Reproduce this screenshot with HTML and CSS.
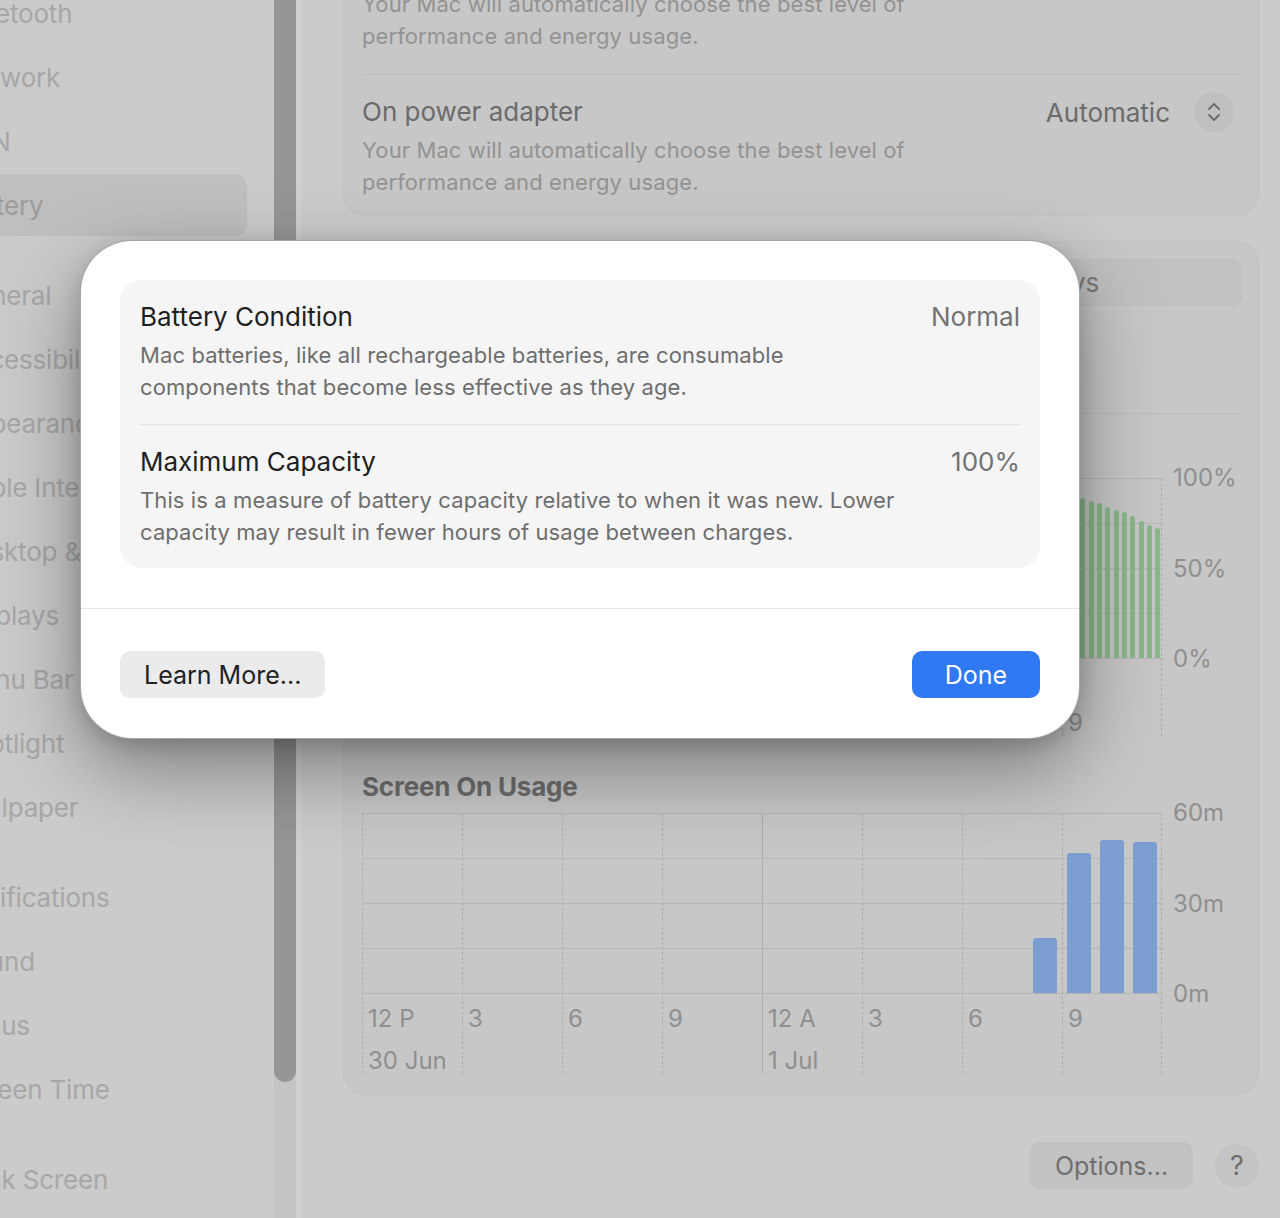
FILE: index.html
```html
<!DOCTYPE html>
<html lang="en">

<head>
    <meta charset="UTF-8">
    <meta name="viewport" content="width=device-width, initial-scale=1.0">
    <title>Battery</title>
    <link rel="stylesheet" href="styles.css">
</head>

<body>
    <div class="window">
        <nav class="sidebar">
            <ul class="nav-group">
                <li>Bluetooth</li>
                <li>Network</li>
                <li>VPN</li>
                <li class="active">Battery</li>
            </ul>
            <ul class="nav-group">
                <li>General</li>
                <li>Accessibility</li>
                <li>Appearance</li>
                <li>Apple Intelligence &amp; Siri</li>
                <li>Desktop &amp; Dock</li>
                <li>Displays</li>
                <li>Menu Bar</li>
                <li>Spotlight</li>
                <li>Wallpaper</li>
            </ul>
            <ul class="nav-group">
                <li>Notifications</li>
                <li>Sound</li>
                <li>Focus</li>
                <li>Screen Time</li>
            </ul>
            <ul class="nav-group">
                <li>Lock Screen</li>
                <li>Privacy &amp; Security</li>
            </ul>
        </nav>

        <div class="scroll-track">
            <div class="scroll-thumb"></div>
        </div>

        <main class="content">
            <section class="card modes">
                <div class="row">
                    <div class="row-text">
                        <p class="row-title">On battery</p>
                        <p class="row-desc">Your Mac will automatically choose the best level of performance and energy usage.</p>
                    </div>
                    <div class="row-value">
                        <span>Automatic</span>
                        <span class="stepper">
                            <svg width="14" height="22" viewBox="0 0 14 22">
                                <path d="M2 8 L7 3 L12 8 M2 14 L7 19 L12 14" fill="none" stroke="#6f6f6f" stroke-width="2" stroke-linecap="round" stroke-linejoin="round"/>
                            </svg>
                        </span>
                    </div>
                </div>
                <div class="row">
                    <div class="row-text">
                        <p class="row-title">On power adapter</p>
                        <p class="row-desc">Your Mac will automatically choose the best level of performance and energy usage.</p>
                    </div>
                    <div class="row-value">
                        <span>Automatic</span>
                        <span class="stepper">
                            <svg width="14" height="22" viewBox="0 0 14 22">
                                <path d="M2 8 L7 3 L12 8 M2 14 L7 19 L12 14" fill="none" stroke="#6f6f6f" stroke-width="2" stroke-linecap="round" stroke-linejoin="round"/>
                            </svg>
                        </span>
                    </div>
                </div>
            </section>

            <section class="card history">
                <div class="segmented">
                    <span>Last 24 Hours</span>
                    <span>Last 10 Days</span>
                </div>
                <div class="summary">
                    <p class="row-title">Last charged to 100%</p>
                </div>

                <h3 class="chart-title">Battery Level</h3>
                <div class="chart">
                    <div class="chart-main">
                        <div class="vlines">
                            <span></span><span></span><span></span><span></span>
                            <span class="day"></span><span></span><span></span><span class="last"></span>
                        </div>
                        <div class="plot battery-plot">
                            <div class="bslot"><i style="height: 100%"></i></div>
                            <div class="bslot"><i style="height: 99%"></i></div>
                            <div class="bslot"><i style="height: 98%"></i></div>
                            <div class="bslot"><i style="height: 97%"></i></div>
                            <div class="bslot"><i style="height: 96%"></i></div>
                            <div class="bslot"><i style="height: 95%"></i></div>
                            <div class="bslot"><i style="height: 94%"></i></div>
                            <div class="bslot"><i style="height: 93%"></i></div>
                            <div class="bslot"><i style="height: 92%"></i></div>
                            <div class="bslot"><i style="height: 91%"></i></div>
                            <div class="bslot"><i style="height: 90%"></i></div>
                            <div class="bslot"><i style="height: 89%"></i></div>
                            <div class="bslot"><i style="height: 87%"></i></div>
                            <div class="bslot"><i style="height: 86%"></i></div>
                            <div class="bslot"><i style="height: 84%"></i></div>
                            <div class="bslot"><i style="height: 82%"></i></div>
                            <div class="bslot"><i style="height: 81%"></i></div>
                            <div class="bslot"><i style="height: 79%"></i></div>
                            <div class="bslot"><i style="height: 76%"></i></div>
                            <div class="bslot"><i style="height: 74%"></i></div>
                            <div class="bslot"><i style="height: 72%"></i></div>
                        </div>
                        <div class="x-labels battery-labels">
                            <span>12 P</span><span>3</span><span>6</span><span>9</span>
                            <span>12 A</span><span>3</span><span>6</span><span>9</span>
                        </div>
                    </div>
                    <div class="y-axis">
                        <span>100%</span>
                        <span>50%</span>
                        <span>0%</span>
                    </div>
                </div>

                <h3 class="chart-title usage-title">Screen On Usage</h3>
                <div class="chart">
                    <div class="chart-main">
                        <div class="vlines">
                            <span></span><span></span><span></span><span></span>
                            <span class="day"></span><span></span><span></span><span class="last"></span>
                        </div>
                        <div class="plot usage-plot">
                            <div class="uslot"><i style="height: 30.5%"></i></div>
                            <div class="uslot"><i style="height: 78%"></i></div>
                            <div class="uslot"><i style="height: 85%"></i></div>
                            <div class="uslot"><i style="height: 84%"></i></div>
                        </div>
                        <div class="x-labels">
                            <span>12 P</span><span>3</span><span>6</span><span>9</span>
                            <span>12 A</span><span>3</span><span>6</span><span>9</span>
                        </div>
                        <div class="x-labels dates">
                            <span>30 Jun</span><span></span><span></span><span></span>
                            <span>1 Jul</span><span></span><span></span><span></span>
                        </div>
                    </div>
                    <div class="y-axis">
                        <span>60m</span>
                        <span>30m</span>
                        <span>0m</span>
                    </div>
                </div>
            </section>

            <div class="actions">
                <button class="btn-options">Options...</button>
                <button class="btn-help">?</button>
            </div>
        </main>
    </div>

    <div class="sheet">
        <div class="sheet-card">
            <div class="info-row">
                <div class="info-text">
                    <p class="info-title">Battery Condition</p>
                    <p class="info-desc">Mac batteries, like all rechargeable batteries, are consumable components that become less effective as they age.</p>
                </div>
                <span class="info-value">Normal</span>
            </div>
            <div class="info-row">
                <div class="info-text">
                    <p class="info-title">Maximum Capacity</p>
                    <p class="info-desc">This is a measure of battery capacity relative to when it was new. Lower capacity may result in fewer hours of usage between charges.</p>
                </div>
                <span class="info-value">100%</span>
            </div>
        </div>
        <div class="sheet-footer">
            <button class="btn-secondary">Learn More...</button>
            <button class="btn-primary">Done</button>
        </div>
    </div>
</body>

</html>
```

FILE: styles.css
```css
* {
    padding: 0;
    margin: 0;
    box-sizing: border-box;
    font-family: Inter, "Liberation Sans", sans-serif;
}

body {
    width: 1280px;
    height: 1218px;
    overflow: hidden;
    background: #cbcbcb;
    position: relative;
}

ul {
    list-style: none;
}

button {
    border: none;
    cursor: default;
}

.window {
    display: flex;
    height: 100%;
}

/* sidebar */

.sidebar {
    width: 274px;
    flex: none;
    overflow: hidden;
}

.nav-group {
    margin: 0 27px 28px -100px;
}

.nav-group:first-child {
    margin-top: -18px;
}

.nav-group li {
    height: 62px;
    margin-bottom: 2px;
    padding-left: 57px;
    display: flex;
    align-items: center;
    white-space: nowrap;
    border-radius: 12px;
    font-size: 26px;
    color: #a7a7a7;
    letter-spacing: -0.2px;
}

.nav-group li.active {
    background: #bfbfbf;
    color: #9c9c9c;
}

.scroll-track {
    width: 28px;
    flex: none;
    background: linear-gradient(to right, #c5c5c5 0 22px, #cfcfcf 22px);
}

.scroll-thumb {
    width: 22px;
    height: 1102px;
    margin-top: -20px;
    border-radius: 11px;
    background: #969696;
}

/* main pane */

.content {
    flex: 1;
    padding: 0 21px 0 41px;
}

.card {
    background: #c7c7c7;
    border: 1px solid #c3c3c3;
    border-radius: 22px;
}

.modes {
    margin-top: -72px;
    padding: 0 18px 0 18px;
}

.row {
    display: flex;
    justify-content: space-between;
    align-items: flex-start;
    padding: 21px 0 22px;
}

.row + .row {
    border-top: 1px solid #bdbdbd;
    padding-bottom: 17px;
}

.row-title {
    font-size: 26px;
    line-height: 32px;
    color: #6b6b6b;
}

.row-desc {
    margin-top: 6px;
    max-width: 590px;
    font-size: 22px;
    line-height: 32px;
    color: #939393;
    letter-spacing: 0.1px;
}

.row-value {
    display: flex;
    align-items: center;
    gap: 24px;
    margin-right: 6px;
    height: 32px;
    font-size: 26px;
    color: #6b6b6b;
}

.stepper {
    width: 40px;
    height: 40px;
    border-radius: 50%;
    background: #c0c0c0;
    display: flex;
    align-items: center;
    justify-content: center;
}

.history {
    margin-top: 25px;
    padding: 17px 16px 18px 18px;
}

.segmented {
    display: flex;
    height: 47px;
    border-radius: 9px;
    background: #c1c1c1;
}

.segmented span {
    flex: 1;
    display: flex;
    align-items: center;
    justify-content: center;
    font-size: 26px;
    color: #7a7a7a;
}

.summary {
    height: 108px;
    border-bottom: 1px solid #bdbdbd;
    display: flex;
    align-items: center;
}

.chart-title {
    margin-top: 12px;
    font-size: 26px;
    line-height: 30px;
    font-weight: 700;
    color: #6c6c6c;
    letter-spacing: -0.2px;
}

.usage-title {
    margin-top: 34px;
}

.chart {
    display: flex;
    gap: 10px;
    margin-top: 22px;
}

.usage-title + .chart {
    margin-top: 11px;
}

.chart-main {
    width: 801px;
    position: relative;
}

.vlines {
    position: absolute;
    top: 0;
    left: 0;
    right: 0;
    bottom: 2px;
    display: grid;
    grid-template-columns: repeat(8, 100px) 1px;
}

.vlines span {
    border-left: 1px dashed #adadad;
}

.vlines span.day {
    border-left-style: solid;
}

.vlines span.last {
    border-right: 1px dashed #adadad;
}

.plot {
    position: relative;
    height: 181px;
    display: flex;
    justify-content: flex-end;
    align-items: flex-end;
    padding-right: 1px;
    background: repeating-linear-gradient(to bottom, #b6b6b6 0 1px, transparent 1px 45px);
    border-bottom: 1px solid #b6b6b6;
}

.bslot {
    width: 8.333px;
    height: 100%;
    padding: 0 1.6px;
    display: flex;
    align-items: flex-end;
}

.bslot i {
    display: block;
    width: 100%;
    border-radius: 3px 3px 0 0;
    background: #89b88a;
}

.uslot {
    width: 33.333px;
    height: 100%;
    display: flex;
    align-items: flex-end;
    padding-left: 4.5px;
}

.uslot i {
    display: block;
    width: 24px;
    border-radius: 3px 3px 0 0;
    background: #7c9dcf;
}

.x-labels {
    display: grid;
    grid-template-columns: repeat(8, 100px);
    margin-top: 10px;
    font-size: 24px;
    line-height: 30px;
    color: #8f8f8f;
}

.x-labels span {
    padding-left: 6px;
    white-space: nowrap;
}

.battery-labels {
    margin-top: 49px;
}

.dates {
    margin-top: 12px;
}

.y-axis {
    height: 211px;
    margin-top: -15px;
    display: flex;
    flex-direction: column;
    justify-content: space-between;
    font-size: 24px;
    line-height: 30px;
    color: #8f8f8f;
}

.actions {
    display: flex;
    justify-content: flex-end;
    align-items: center;
    gap: 22px;
    margin-top: 47px;
}

.btn-options {
    width: 163px;
    height: 47px;
    border-radius: 10px;
    background: #c2c2c2;
    font-size: 25px;
    color: #6e6e6e;
}

.btn-help {
    width: 44px;
    height: 44px;
    border-radius: 50%;
    background: #c4c4c4;
    font-size: 27px;
    color: #6e6e6e;
}

/* battery health sheet */

.sheet {
    position: absolute;
    top: 240px;
    left: 80px;
    width: 1000px;
    background: #ffffff;
    border: 1px solid rgba(0, 0, 0, 0.35);
    border-radius: 52px;
    box-shadow: 0 30px 80px rgba(0, 0, 0, 0.38), 0 6px 20px rgba(0, 0, 0, 0.15);
}

.sheet-card {
    margin: 39px 39px 40px;
    padding: 0 20px;
    background: #f5f5f5;
    border-radius: 22px;
}

.info-row {
    display: flex;
    justify-content: space-between;
    align-items: flex-start;
    padding: 21px 0;
}

.info-row + .info-row {
    border-top: 1px solid #e3e3e3;
    padding-bottom: 20px;
}

.info-title {
    font-size: 26px;
    line-height: 32px;
    color: #1f1f1f;
}

.info-desc {
    margin-top: 6px;
    max-width: 760px;
    font-size: 22px;
    line-height: 32px;
    color: #6e6e6e;
    letter-spacing: 0.1px;
}

.info-value {
    font-size: 26px;
    line-height: 32px;
    color: #737373;
}

.sheet-footer {
    display: flex;
    justify-content: space-between;
    border-top: 1px solid #e5e5e5;
    padding: 42px 39px 40px;
}

.btn-secondary {
    height: 47px;
    padding: 0 24px;
    border-radius: 10px;
    background: #ebebeb;
    font-size: 25px;
    color: #222222;
}

.btn-primary {
    width: 128px;
    height: 47px;
    border-radius: 10px;
    background: #3079f5;
    font-size: 25px;
    color: #ffffff;
}
```
